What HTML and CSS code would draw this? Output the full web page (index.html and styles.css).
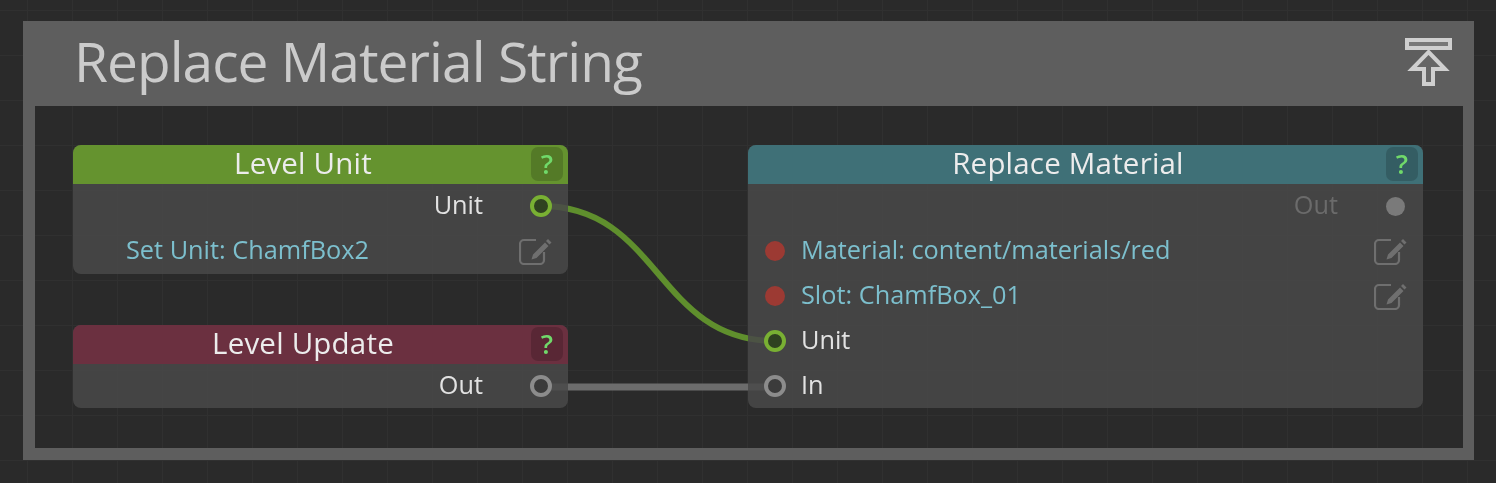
FILE: index.html
```html
<!DOCTYPE html>
<html lang="en">
<head>
<meta charset="UTF-8">
<meta name="viewport" content="width=device-width, initial-scale=1.0">
<title>Replace Material String</title>
<link rel="stylesheet" href="styles.css">
</head>
<body>

<svg class="defs" width="0" height="0">
    <symbol id="edit" viewBox="0 0 33 27">
        <path d="M17 2H5a4 4 0 0 0-4 4v16a4 4 0 0 0 4 4h16a4 4 0 0 0 4-4v-8" fill="none" stroke="currentColor" stroke-width="2.200"/>
        <path d="M29 1l3.500 3.500-2 2-3.500-3.500zM26 4.500l3.500 3.500-12 12-5 1.500 1.500-5z" fill="currentColor"/>
    </symbol>
</svg>

<section class="frame">
    <header class="frame-head">
        <h1>Replace Material String</h1>
        <svg class="collapse" width="47" height="50" viewBox="0 0 47 50">
            <rect x="2" y="2" width="43" height="8" fill="#787878" stroke="#cfcfcf" stroke-width="4"/>
            <path d="M23.500 14L40 31H28V46H19V31H7z" fill="#666" stroke="#cfcfcf" stroke-width="4"/>
        </svg>
    </header>

    <div class="graph">
        <svg class="wires" width="1428" height="342" viewBox="35 106 1428 342">
            <path class="wire wire-unit" d="M541 206C660 206 656 341 775 341"/>
            <path class="wire wire-flow" d="M541 387H775"/>
        </svg>

        <div class="node node-unit">
            <div class="node-title title-green">Level Unit<span class="help">?</span></div>
            <div class="row row-out"><span>Unit</span><i class="pin pin-green"></i></div>
            <div class="row row-setting">
                <span class="value">Set Unit: ChamfBox2</span>
                <svg class="edit" width="33" height="27"><use href="#edit"/></svg>
            </div>
        </div>

        <div class="node node-update">
            <div class="node-title title-red">Level Update<span class="help">?</span></div>
            <div class="row row-out"><span>Out</span><i class="pin pin-grey"></i></div>
        </div>

        <div class="node node-replace">
            <div class="node-title title-teal">Replace Material<span class="help">?</span></div>
            <div class="row row-out row-off"><span>Out</span><i class="pin pin-off"></i></div>
            <div class="row row-in">
                <i class="pin pin-red"></i>
                <span class="value">Material: content/materials/red</span>
                <svg class="edit" width="33" height="27"><use href="#edit"/></svg>
            </div>
            <div class="row row-in">
                <i class="pin pin-red"></i>
                <span class="value">Slot: ChamfBox_01</span>
                <svg class="edit" width="33" height="27"><use href="#edit"/></svg>
            </div>
            <div class="row row-in"><i class="pin pin-green"></i><span>Unit</span></div>
            <div class="row row-in"><i class="pin pin-grey"></i><span>In</span></div>
        </div>
    </div>
</section>

</body>
</html>
```

FILE: styles.css
```css
html, body {
    margin: 0;
    height: 483px;
    overflow: hidden;
}
body {
    font-family: "Open Sans", "Noto Sans", sans-serif;
    background-color: #2a2a2a;
    background-image:
        linear-gradient(#303030 1px, transparent 1px),
        linear-gradient(90deg, #303030 1px, transparent 1px);
    background-size: 45px 45px;
    background-position: 27px 10px;
    background-attachment: fixed;
}
.defs {
    position: absolute;
}
.frame {
    box-sizing: border-box;
    width: 1451px;
    height: 439px;
    margin: 21px 0 0 23px;
    padding: 0 11px 12px 12px;
    background: #5e5e5e;
    display: flex;
    flex-direction: column;
    filter: blur(0.6px);
}
.frame-head {
    height: 85px;
    flex: none;
    display: flex;
    justify-content: space-between;
    padding: 0 11px 0 39px;
}
h1 {
    margin: 0;
    font-size: 55px;
    line-height: 80px;
    font-weight: 400;
    color: #cbcbcb;
    letter-spacing: -0.95px;
}
.collapse {
    margin-top: 17px;
}
.graph {
    flex: 1;
    position: relative;
    background-color: #2a2a2a;
    background-image:
        linear-gradient(#303030 1px, transparent 1px),
        linear-gradient(90deg, #303030 1px, transparent 1px);
    background-size: 45px 45px;
    background-position: 27px 10px;
    background-attachment: fixed;
}
.wires {
    position: absolute;
    left: 0;
    top: 0;
}
.wire {
    fill: none;
    stroke-width: 6;
}
.wire-unit {
    stroke: #5f8f2d;
}
.wire-flow {
    stroke: #6c6c6c;
    stroke-width: 7;
}

.node {
    position: absolute;
    background: rgba(73, 73, 73, 0.85);
    border-radius: 8px;
    font-size: 25.300px;
    color: #e2e2e2;
}
.node-unit {
    left: 38px;
    top: 39px;
    width: 495px;
    height: 129px;
}
.node-update {
    left: 38px;
    top: 219px;
    width: 495px;
    height: 83px;
}
.node-replace {
    left: 713px;
    top: 39px;
    width: 675px;
    height: 263px;
}
.node-title {
    box-sizing: border-box;
    height: 39px;
    padding-right: 35px;
    line-height: 36px;
    text-align: center;
    font-size: 29.500px;
    letter-spacing: 0.2px;
    color: #ececec;
    border-radius: 8px 8px 0 0;
    position: relative;
}
.title-green {
    background: #65932f;
}
.title-red {
    background: #6b3040;
}
.title-teal {
    background: #3f7077;
}
.help {
    position: absolute;
    right: 5px;
    top: 2px;
    width: 32px;
    height: 34px;
    border-radius: 7px;
    background: rgba(0, 0, 0, 0.17);
    color: #70d96a;
    font-size: 27px;
    font-weight: 600;
    line-height: 33px;
    letter-spacing: 0;
}

.row {
    box-sizing: border-box;
    height: 45px;
    padding-bottom: 1px;
    display: flex;
    align-items: center;
}
.row span {
    margin-bottom: 4px;
}
.row-out {
    justify-content: flex-end;
    padding-right: 16px;
}
.row-out span {
    margin-right: 47px;
}
.row-off {
    color: #6b6b6b;
    padding-right: 18px;
}
.row-off span {
    margin-right: 48px;
}
.row-setting {
    justify-content: space-between;
    padding-left: 53px;
    padding-right: 16px;
}
.row-in {
    padding-left: 16px;
    padding-right: 16px;
}
.row-in .pin {
    margin-right: 15px;
}
.row-in .edit {
    margin-left: auto;
}
.value {
    color: #7cbfcd;
}
.edit {
    color: #6f6f6f;
}

.pin {
    box-sizing: border-box;
    display: block;
    flex: none;
    width: 22px;
    height: 22px;
    border-radius: 50%;
    background: #3b3b3b;
}
.pin-green {
    background: #2f4220;
    border: 4px solid #79b033;
}
.pin-grey {
    border: 4px solid #8c8c8c;
}
.row-in .pin-red {
    width: 20px;
    height: 20px;
    margin-left: 1px;
    margin-right: 16px;
    background: #9c3a33;
}
.pin-off {
    width: 19px;
    height: 19px;
    background: #7a7a7a;
}
```
